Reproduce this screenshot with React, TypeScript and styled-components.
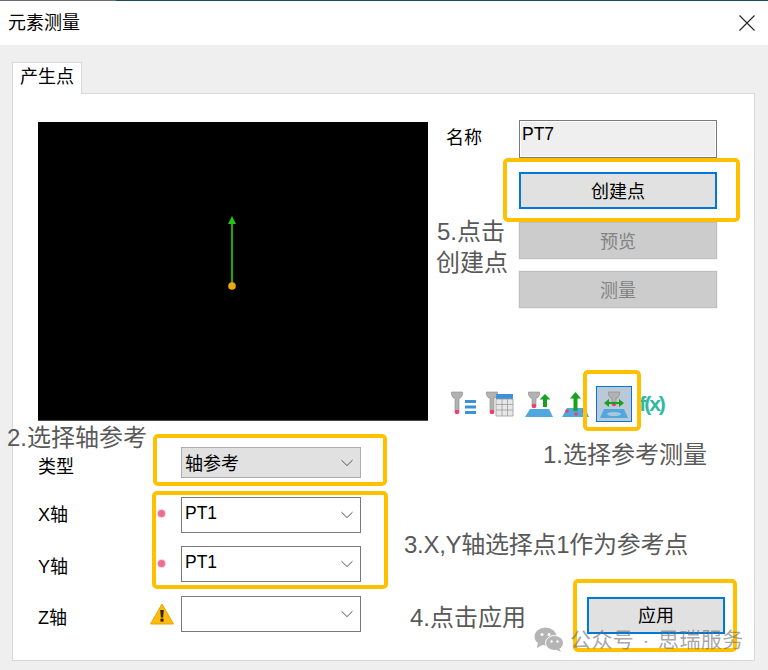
import React from "react";
import styled, { createGlobalStyle } from "styled-components";

const CJK = `"Liberation Sans", "Noto Sans CJK SC", sans-serif`;

const Global = createGlobalStyle`
  html, body { margin: 0; padding: 0; background: #efefef; }
  body { font-family: ${CJK}; }
`;

const Win = styled.div`
  position: relative;
  width: 768px;
  height: 670px;
  overflow: hidden;
  background: #efefef;
  color: #000;
`;
const TopStrip = styled.div`
  height: 1px;
  background: linear-gradient(to right, #6f6f6f 0, #6f6f6f 116px, #1c4a5e 116px, #1c4a5e 100%);
`;
const TitleBar = styled.header`
  height: 44px;
  background: #fff;
  display: flex;
  align-items: center;
  justify-content: space-between;
  padding: 0 13px 0 8px;
`;
const Title = styled.span`
  font-size: 18px;
  line-height: 44px;
`;
const Body = styled.main`
  padding: 17px 13px 0 12px;
`;
const Tab = styled.div`
  position: relative;
  z-index: 1;
  width: 70px;
  height: 32px;
  margin-bottom: -1px;
  box-sizing: border-box;
  background: #fff;
  border: 1px solid #d9d9d9;
  border-bottom: none;
  font-size: 18px;
  line-height: 29px;
  text-align: center;
`;
const Panel = styled.section`
  box-sizing: border-box;
  width: 743px;
  height: 568px;
  background: #fff;
  border: 1px solid #d9d9d9;
  padding: 28px 0 0 25px;
`;
const TopRow = styled.div`
  display: flex;
  align-items: flex-start;
`;
const Viewport = styled.div`
  box-sizing: border-box;
  width: 390px;
  height: 299px;
  background: #000;
  border-bottom: 1px solid #4a4a4a;
  display: flex;
  justify-content: center;
  padding: 94px 2px 0 0;
`;
const Side = styled.div`
  margin: -2px 0 0 18px;
  display: flex;
  flex-direction: column;
`;
const NameRow = styled.div`
  display: flex;
  align-items: flex-start;
`;
const NameLabel = styled.label`
  width: 73px;
  font-size: 18px;
  line-height: 36px;
`;
const NameInput = styled.div`
  box-sizing: border-box;
  width: 198px;
  height: 38px;
  background: #efefef;
  border: 1px solid #7a7a7a;
  box-shadow: inset 0 0 0 1px #fff;
  font-size: 17.5px;
  line-height: 26px;
  padding-left: 2px;
`;
const Actions = styled.div`
  margin: 14px 0 0 73px;
  display: flex;
  flex-direction: column;
`;
const Btn = styled.button<{ $w?: number; $mb?: number }>`
  box-sizing: border-box;
  width: ${(p) => p.$w ?? 198}px;
  height: 37px;
  margin-bottom: ${(p) => p.$mb ?? 0}px;
  padding: 0 0 2px;
  font-family: ${CJK};
  font-size: 18px;
  color: #000;
  background: #e1e1e1;
  border: 2px solid #0078d7;
  border-radius: 0;
  &:disabled {
    color: #838383;
    background: #cccccc;
    border: 1px solid #bfbfbf;
    outline: 1px solid #f3f3f3;
  }
`;
const Toolbar = styled.div`
  margin: 78px 0 0 2px;
  display: flex;
  gap: 1px;
`;
const ToolCell = styled.div<{ $active?: boolean }>`
  box-sizing: border-box;
  width: 36px;
  height: 36px;
  display: flex;
  align-items: center;
  justify-content: center;
  background: ${(p) => (p.$active ? "#bac8d7" : "transparent")};
  border: 1px solid ${(p) => (p.$active ? "#0078d7" : "transparent")};
`;
const Fx = styled.span`
  font-family: "Liberation Sans", sans-serif;
  font-weight: 700;
  font-size: 21px;
  letter-spacing: -2px;
  padding-left: 1px;
  color: #2fb8a3;
  white-space: nowrap;
`;
const Form = styled.div`
  margin-top: 25px;
  display: flex;
  flex-direction: column;
`;
const Row = styled.div<{ $mb?: number; $h?: number }>`
  display: flex;
  align-items: center;
  height: ${(p) => p.$h ?? 36}px;
  margin-bottom: ${(p) => p.$mb ?? 0}px;
`;
const RowLabel = styled.label<{ $dy?: number }>`
  width: 105px;
  font-size: 18px;
  line-height: 26px;
  padding-top: ${(p) => p.$dy ?? 0}px;
`;
const Marker = styled.div`
  width: 38px;
  display: flex;
  justify-content: center;
`;
const Dot = styled.span<{ $up: number }>`
  width: 7px;
  height: 7px;
  border-radius: 50%;
  background: #ee6c8e;
  box-shadow: 0 0 1px 1px rgba(238, 108, 142, 0.35);
  margin: 0 1px ${(p) => p.$up}px 0;
`;
const Select = styled.div<{ $grey?: boolean; $h?: number }>`
  box-sizing: border-box;
  width: 180px;
  height: ${(p) => p.$h ?? 36}px;
  display: flex;
  align-items: center;
  justify-content: space-between;
  padding: 0 6px 0 3px;
  font-size: 18px;
  background: ${(p) => (p.$grey ? "#e1e1e1" : "#fff")};
  border: 1px solid ${(p) => (p.$grey ? "#adadad" : "#7a7a7a")};
`;
const GreyText = styled.span`
  line-height: 26px;
  padding-top: 3px;
`;
const SelectText = styled.span`
  font-size: 17.5px;
  line-height: 26px;
  margin-bottom: 5px;
`;
const ApplyWrap = styled.div`
  margin: 2px 0 0 226px;
`;
const Callout = styled.div<{ $x: number; $y: number; $w: number; $h: number }>`
  position: absolute;
  box-sizing: border-box;
  left: ${(p) => p.$x}px;
  top: ${(p) => p.$y}px;
  width: ${(p) => p.$w}px;
  height: ${(p) => p.$h}px;
  border: 4px solid #ffc000;
  border-radius: 5px;
  pointer-events: none;
`;
const Note = styled.div<{ $x: number; $y: number; $ls?: number }>`
  position: absolute;
  left: ${(p) => p.$x}px;
  top: ${(p) => p.$y}px;
  font-size: 24px;
  line-height: 30px;
  letter-spacing: ${(p) => p.$ls ?? 0}px;
  color: #595959;
  white-space: nowrap;
`;
const Watermark = styled.div`
  position: absolute;
  left: 534px;
  top: 627px;
  display: flex;
  align-items: center;
  gap: 6px;
  font-size: 21px;
  line-height: 26px;
  word-spacing: 2px;
  letter-spacing: 0.4px;
  color: rgba(110, 110, 110, 0.62);
  white-space: nowrap;
`;

const Chevron = () => (
  <svg width="14" height="8" viewBox="0 0 14 8" fill="none" stroke="#555" strokeWidth="1">
    <path d="M1.5 1.2 7 6.600l5.500-5.400" />
  </svg>
);
const Close = () => (
  <svg width="16" height="16" viewBox="0 0 16 16" stroke="#222" strokeWidth="1.1">
    <path d="M.5.5l15 15M15.500.5l-15 15" />
  </svg>
);
const Arrow = () => (
  <svg width="12" height="74" viewBox="0 0 12 74">
    <path d="M6 5V70" stroke="#2f9e10" strokeWidth="2.200" />
    <path d="M6 0l4 8H2z" fill="#25c31c" />
    <circle cx="6" cy="70" r="3.800" fill="#eda80f" />
  </svg>
);
const Warn = () => (
  <svg width="24" height="22" viewBox="0 0 24 22">
    <path d="M12 1 23.500 21H.5z" fill="#fdbb10" stroke="#eaa400" strokeLinejoin="round" />
    <path d="M10.200 7h3.600l-.7 7.600h-2.200z" fill="#2e2400" />
    <rect x="10.500" y="15.600" width="3" height="3" fill="#2e2400" />
  </svg>
);
const Probe = ({ x, y, h = 20 }: { x: number; y: number; h?: number }) => (
  <g>
    <path
      d={`M${x - 5.5} ${y}h11v3l-2 3h-1.500v${h - 6}h-4v-${h - 6}H${x - 3.5}l-2 -3z`}
      fill="#b2b2b2"
      stroke="#8a8a8a"
      strokeWidth=".6"
    />
    <circle cx={x} cy={y + h} r="2.300" fill="#ef3f68" />
  </g>
);
const IconList = () => (
  <svg width="34" height="34" viewBox="1 1 34 34">
    <Probe x={9} y={6} />
    <path d="M17 14h11v3H17zM17 19.500h11v3H17zM17 25h11v3H17z" fill="#3d91d6" />
  </svg>
);
const IconTable = () => (
  <svg width="34" height="34" viewBox="1 1 34 34">
    <Probe x={7} y={6} />
    <path d="M11 8h17v5H11z" fill="#3d91d6" />
    <path d="M11 13h17v17H11z" fill="#e8e8e8" stroke="#9a9a9a" strokeWidth=".8" />
    <path d="M17 13v17M22.500 13v17M11 18.500h17M11 24h17" stroke="#9a9a9a" strokeWidth=".8" />
  </svg>
);
const IconProbeUp = () => (
  <svg width="34" height="34" viewBox="1 1 34 34">
    <Probe x={12} y={6} h={14} />
    <path d="M23 8l5.500 5.500h-3.500V21h-4v-7.500h-3.500z" fill="#18a020" />
    <path d="M8 23h19l4 8H3z" fill="#4fa9df" />
  </svg>
);
const IconPlaneUp = () => (
  <svg width="34" height="34" viewBox="1 1 34 34">
    <path d="M8 22h18l4 9H3z" fill="#4fa9df" />
    <path d="M16.500 6l5.500 6.500h-3.500V25h-4V12.500H11z" fill="#18a020" />
    <circle cx="8" cy="25" r="1.800" fill="#ef3f68" />
    <circle cx="17" cy="28" r="1.800" fill="#ef3f68" />
    <circle cx="25" cy="25" r="1.800" fill="#ef3f68" />
  </svg>
);
const IconRef = () => (
  <svg width="34" height="34" viewBox="1 1 34 34">
    <Probe x={18} y={6} h={12} />
    <path d="M8 23h20l4 9H4z" fill="#4fa9df" />
    <ellipse cx="18" cy="28" rx="7" ry="2" fill="#a9c8de" />
    <path d="M12 17h12" stroke="#18a020" strokeWidth="2" />
    <path d="M8 17l5-4v8zM28 17l-5-4v8z" fill="#18a020" />
  </svg>
);
const WeChat = () => (
  <svg width="30" height="26" viewBox="0 0 30 26" fill="#b5b5b5">
    <ellipse cx="11.500" cy="9.500" rx="11" ry="9" />
    <path d="M4 15l-1 6 6-3.500z" />
    <ellipse cx="20.500" cy="16" rx="9" ry="7.500" stroke="#fff" strokeWidth="1" />
    <path d="M25 21l2 4-5-2.500z" />
    <circle cx="8" cy="7.500" r="1.500" fill="#fff" />
    <circle cx="15" cy="7.500" r="1.500" fill="#fff" />
    <circle cx="17.500" cy="14.500" r="1.200" fill="#fff" />
    <circle cx="23.500" cy="14.500" r="1.200" fill="#fff" />
  </svg>
);

export default function App() {
  return (
    <Win>
      <Global />
      <TopStrip />
      <TitleBar>
        <Title>元素测量</Title>
        <Close />
      </TitleBar>
      <Body>
        <Tab>产生点</Tab>
        <Panel>
          <TopRow>
            <Viewport>
              <Arrow />
            </Viewport>
            <Side>
              <NameRow>
                <NameLabel>名称</NameLabel>
                <NameInput>PT7</NameInput>
              </NameRow>
              <Actions>
                <Btn $mb={13}>创建点</Btn>
                <Btn disabled $mb={12}>预览</Btn>
                <Btn disabled>测量</Btn>
              </Actions>
              <Toolbar>
                <ToolCell><IconList /></ToolCell>
                <ToolCell><IconTable /></ToolCell>
                <ToolCell><IconProbeUp /></ToolCell>
                <ToolCell><IconPlaneUp /></ToolCell>
                <ToolCell $active><IconRef /></ToolCell>
                <ToolCell><Fx>f(x)</Fx></ToolCell>
              </Toolbar>
            </Side>
          </TopRow>
          <Form>
            <Row $h={31} $mb={19}>
              <RowLabel $dy={8}>类型</RowLabel>
              <Marker />
              <Select $grey $h={31}>
                <GreyText>轴参考</GreyText>
                <Chevron />
              </Select>
            </Row>
            <Row $mb={13}>
              <RowLabel>X轴</RowLabel>
              <Marker><Dot $up={4} /></Marker>
              <Select>
                <SelectText>PT1</SelectText>
                <Chevron />
              </Select>
            </Row>
            <Row $mb={14}>
              <RowLabel $dy={6}>Y轴</RowLabel>
              <Marker><Dot $up={2} /></Marker>
              <Select>
                <SelectText>PT1</SelectText>
                <Chevron />
              </Select>
            </Row>
            <Row>
              <RowLabel $dy={7}>Z轴</RowLabel>
              <Marker><Warn /></Marker>
              <Select>
                <span />
                <Chevron />
              </Select>
              <ApplyWrap>
                <Btn $w={138}>应用</Btn>
              </ApplyWrap>
            </Row>
          </Form>
        </Panel>
      </Body>

      <Callout $x={503} $y={158} $w={237} $h={64} />
      <Callout $x={583} $y={370} $w={58} $h={61} />
      <Callout $x={153} $y={434} $w={234} $h={52} />
      <Callout $x={152} $y={491} $w={236} $h={98} />
      <Callout $x={573} $y={579} $w={164} $h={73} />

      <Note $x={437} $y={217}>5.点击</Note>
      <Note $x={436} $y={248}>创建点</Note>
      <Note $x={7} $y={423}>2.选择轴参考</Note>
      <Note $x={543} $y={440}>1.选择参考测量</Note>
      <Note $x={404} $y={530} $ls={-0.27}>3.X,Y轴选择点1作为参考点</Note>
      <Note $x={410} $y={603}>4.点击应用</Note>

      <Watermark>
        <WeChat />
        <span>公众号 · 思瑞服务</span>
      </Watermark>
    </Win>
  );
}
